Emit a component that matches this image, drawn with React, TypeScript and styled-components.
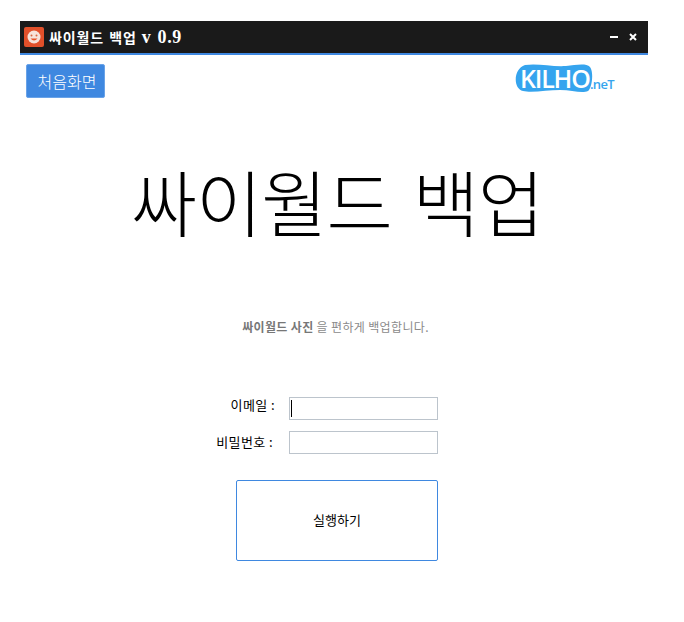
import React from 'react'
import styled, { createGlobalStyle } from 'styled-components'

const KR = `"Noto Sans CJK KR", "Liberation Sans", sans-serif`

export default function App(): React.ReactElement {
  return (
    <>
      <GlobalStyle />
      <Window>
        <TitleBar>
          <AppIcon />
          <TitleText>싸이월드 백업 <Version>v 0.9</Version></TitleText>
          <WindowButtons>
            <MinimizeIcon />
            <CloseIcon />
          </WindowButtons>
        </TitleBar>
        <TopRow>
          <HomeButton>처음화면</HomeButton>
          <Logo />
        </TopRow>
        <Heading>싸이월드 백업</Heading>
        <Subtitle><strong>싸이월드 사진</strong> 을 편하게 백업합니다.</Subtitle>
        <Form>
          <FormRow>
            <Label $raise={8}>이메일 :</Label>
            <TextInput as="div"><Caret /></TextInput>
          </FormRow>
          <FormRow>
            <Label $shift={2} $raise={2}>비밀번호 :</Label>
            <TextInput as="div" />
          </FormRow>
          <RunButton>실행하기</RunButton>
        </Form>
      </Window>
    </>
  )
}

function AppIcon(): React.ReactElement {
  return (
    <svg width="20" height="20" viewBox="0 0 20 20">
      <rect width="20" height="20" rx="2" fill="#e2502a" />
      <circle cx="10" cy="10" r="6.5" fill="#f7e3da" />
      <circle cx="7.5" cy="8.5" r="1" fill="#d9653f" />
      <circle cx="12.5" cy="8.5" r="1" fill="#d9653f" />
      <path d="M6.5 11.5 Q10 15.5 13.5 11.5" fill="#e8552a" />
    </svg>
  )
}

function MinimizeIcon(): React.ReactElement {
  return (
    <svg width="8" height="8" viewBox="0 0 8 8">
      <rect x="0" y="3" width="8" height="2" fill="#fff" />
    </svg>
  )
}

function CloseIcon(): React.ReactElement {
  return (
    <svg width="8" height="8" viewBox="0 0 8 8">
      <path d="M1 1 L7 7 M7 1 L1 7" stroke="#fff" strokeWidth="2" />
    </svg>
  )
}

function Logo(): React.ReactElement {
  return (
    <LogoWrap>
      <svg width="100" height="30" viewBox="0 0 100 30">
        <path
          d="M11 1 C24 -1 38 3 52 2 C62 1 72 -1 76 3 C80 8 78 24 74 27 C68 30 58 26 46 26 C34 26 18 29 9 27 C-1 25 -1 5 11 1 Z"
          fill="#35a4ee"
        />
      </svg>
      <LogoName>KILHO</LogoName>
      <LogoNet>.neT</LogoNet>
    </LogoWrap>
  )
}

const GlobalStyle = createGlobalStyle`
  body {
    margin: 0;
    background: #fff;
    font-family: ${KR};
  }
`

const Window = styled.div`
  width: 628px;
  margin: 21px 0 0 20px;
  display: flex;
  flex-direction: column;
`

const TitleBar = styled.div`
  height: 32px;
  box-sizing: content-box;
  background: #1a1a1a;
  border-bottom: 2px solid #3f88e0;
  display: flex;
  align-items: center;
  padding-left: 4px;
  gap: 5px;
`

const TitleText = styled.div`
  color: #fff;
  font-size: 14px;
  font-weight: 700;
  letter-spacing: 0.9px;
  word-spacing: 1px;
  white-space: pre;
`

const Version = styled.span`
  font-family: "Liberation Serif", serif;
  font-weight: 700;
  font-size: 18px;
  letter-spacing: 0.6px;
`

const WindowButtons = styled.div`
  margin-left: auto;
  display: flex;
  gap: 11px;
  padding-right: 11px;
`

const TopRow = styled.div`
  display: flex;
  justify-content: space-between;
  align-items: flex-start;
  padding: 9px 34px 0 6px;
`

const HomeButton = styled.button`
  width: 79px;
  height: 34px;
  padding: 0 0 0 3px;
  border: 1px solid #6aa3e8;
  border-radius: 2px;
  background: #3f88e0;
  color: #fff;
  font-family: ${KR};
  font-size: 16px;
  font-weight: 300;
`

const LogoWrap = styled.div`
  position: relative;
  width: 100px;
  height: 30px;
`

const LogoName = styled.span`
  position: absolute;
  left: 6px;
  top: 0;
  line-height: 28px;
  color: #fff;
  font-family: "Open Sans", sans-serif;
  font-size: 25px;
  font-weight: 600;
  letter-spacing: -1.2px;
`

const LogoNet = styled.span`
  position: absolute;
  left: 76px;
  top: 12px;
  line-height: 16px;
  color: #35a4ee;
  font-family: "Open Sans", sans-serif;
  font-size: 13px;
  font-weight: 600;
  letter-spacing: -0.7px;
`

const Heading = styled.h1`
  margin: 49px 0 0;
  padding-left: 6px;
  text-align: center;
  color: #000;
  font-size: 72px;
  font-weight: 300;
  word-spacing: 6px;
  letter-spacing: -1px;
  line-height: 106px;
`

const Subtitle = styled.p`
  margin: 66px 0 0;
  padding-left: 3px;
  text-align: center;
  color: #8a8a8a;
  font-size: 12px;
  letter-spacing: 0.35px;
  line-height: 16px;
  strong {
    font-weight: 700;
    color: #777;
  }
`

const Form = styled.div`
  margin: 62px 0 0 196px;
  width: 222px;
  display: flex;
  flex-direction: column;
`

const FormRow = styled.div`
  display: flex;
  align-items: center;
  justify-content: flex-end;
  margin-bottom: 11px;
`

const Label = styled.label<{ $shift?: number; $raise?: number }>`
  margin-right: ${p => 14 + (p.$shift ?? 0)}px;
  margin-bottom: ${p => p.$raise ?? 0}px;
  color: #000;
  font-size: 13px;
  font-weight: 400;
  line-height: 15px;
  letter-spacing: 0.4px;
`

const TextInput = styled.input`
  box-sizing: border-box;
  width: 149px;
  height: 23px;
  border: 1px solid #bcc4cc;
  background: #fff;
  display: flex;
  align-items: center;
  padding-left: 1px;
`

const Caret = styled.span`
  width: 1px;
  height: 17px;
  background: #000;
`

const RunButton = styled.button`
  align-self: flex-end;
  margin-top: 15px;
  width: 202px;
  height: 81px;
  padding: 0 0 2px;
  border: 1px solid #3f88e0;
  border-radius: 2px;
  background: #fff;
  color: #000;
  font-family: ${KR};
  font-size: 13px;
  font-weight: 400;
`
